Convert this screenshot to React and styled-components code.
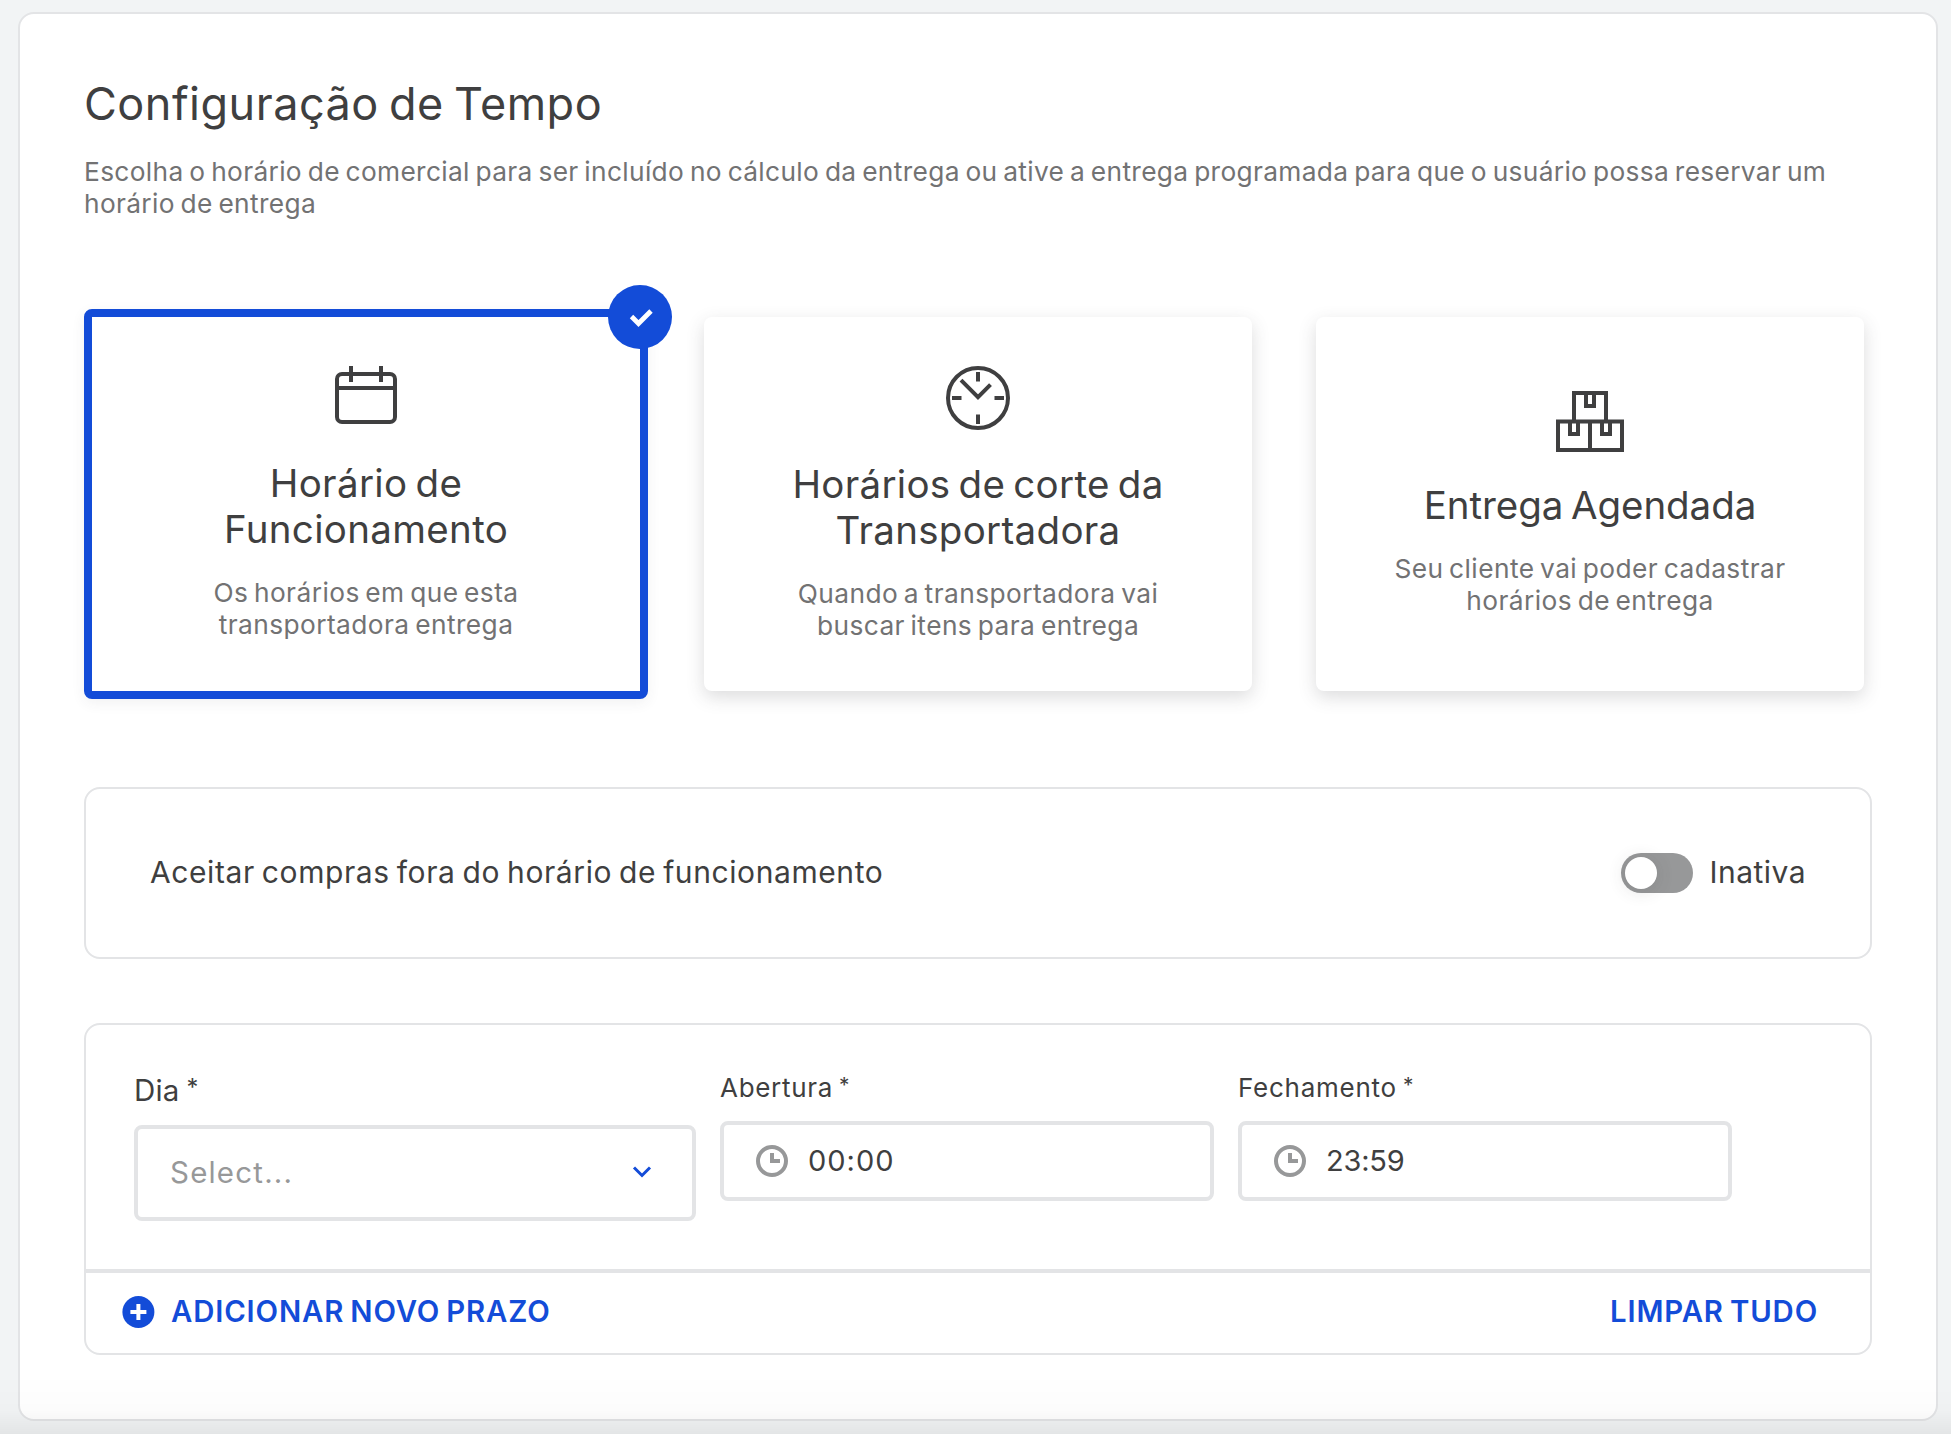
import React from "react";
import styled, { createGlobalStyle, css } from "styled-components";

const c = {
  page: "#f2f4f5",
  line: "#e3e4e6",
  text: "#3f3f40",
  muted: "#727273",
  soft: "#979899",
  blue: "#134cd8",
};

const Global = createGlobalStyle`
  *, *::before, *::after { box-sizing: border-box; }
  body {
    margin: 0;
    background: ${c.page};
    color: ${c.text};
    font-family: Inter, "Liberation Sans", sans-serif;
    overflow: hidden;
  }
  h1, h2, p { margin: 0; font-weight: 400; }
  svg { display: block; flex: none; overflow: visible; }
`;

const Page = styled.main`
  height: 1434px;
  padding: 12px 13px 0 18px;
  overflow: hidden;
`;

const Panel = styled.section`
  padding: 64px;
  background: #fff;
  border: 2px solid ${c.line};
  border-radius: 16px;
`;

const Title = styled.h1`
  font-size: 45px;
  line-height: 52px;
  letter-spacing: 0.5px;
  word-spacing: -3px;
`;

const Lead = styled.p`
  margin-top: 26px;
  font-size: 26.3px;
  line-height: 32px;
  letter-spacing: 0.343px;
  word-spacing: -2px;
  color: ${c.muted};
`;

const Options = styled.div`
  display: grid;
  grid-template-columns: repeat(3, 548px);
  gap: 64px;
  margin: 97px 8px 96px;
`;

const Option = styled.article`
  position: relative;
  display: flex;
  flex-direction: column;
  align-items: center;
  justify-content: center;
  height: 374px;
  text-align: center;
  background: #fff;
  border-radius: 8px;
  box-shadow: 0 6px 18px rgba(61, 62, 64, 0.18);
  ${(p) =>
    p.$selected &&
    css`
      height: 390px;
      margin: -8px;
      border: 8px solid ${c.blue};
      box-shadow: 0 4px 14px rgba(61, 62, 64, 0.07);
    `}
`;

const OptionTitle = styled.h2`
  margin: 31px 0 1px;
  max-width: ${(p) => p.$width}px;
  font-size: 38.5px;
  line-height: 46px;
  letter-spacing: ${(p) => p.$tracking}px;
  word-spacing: -3px;
`;

const OptionText = styled.p`
  margin-top: 24px;
  max-width: 420px;
  font-size: 26.3px;
  line-height: 32px;
  letter-spacing: 0.43px;
  word-spacing: -2.2px;
  color: ${c.muted};
`;

const Badge = styled.span`
  position: absolute;
  top: -32px;
  right: -32px;
  width: 64px;
  height: 64px;
  border-radius: 50%;
  background: ${c.blue};
`;

const Box = styled.section`
  border: 2px solid ${c.line};
  border-radius: 16px;
`;

const ToggleBox = styled(Box)`
  display: flex;
  align-items: center;
  justify-content: space-between;
  height: 172px;
  margin-bottom: 64px;
  padding: 0 64px;
`;

const Body = styled.span`
  padding-bottom: 2px;
  font-size: 30px;
  line-height: 38px;
  letter-spacing: ${(p) => p.$tracking}px;
  word-spacing: -2px;
`;

const ToggleGroup = styled.label`
  display: flex;
  align-items: center;
  gap: 17px;
`;

const Track = styled.span`
  display: flex;
  align-items: center;
  width: 72px;
  height: 40px;
  padding: 4px;
  border-radius: 20px;
  background: ${c.soft};
`;

const Knob = styled.span`
  width: 32px;
  height: 32px;
  border-radius: 50%;
  background: #fff;
  box-shadow: 0 2px 18px rgba(61, 62, 64, 0.16);
`;

const Fields = styled.div`
  display: flex;
  align-items: flex-start;
  gap: 24px;
  height: 244px;
  padding: 48px 48px 0;
`;

const Field = styled.div`
  width: ${(p) => p.$width}px;
`;

const Label = styled.div`
  display: flex;
  margin-bottom: 18px;
  font-size: ${(p) => (p.$large ? 29.5 : 26)}px;
  line-height: ${(p) => (p.$large ? 34 : 30)}px;
  letter-spacing: ${(p) => p.$tracking}px;
`;

const Star = styled.span`
  margin: -2px 0 0 ${(p) => (p.$large ? 7 : 6)}px;
  font-size: 0.8em;
`;

const Control = styled.div`
  display: flex;
  align-items: center;
  height: ${(p) => p.$height}px;
  padding: 0 ${(p) => (p.$height > 90 ? 41 : 32)}px 0 ${(p) => (p.$height > 90 ? 31 : 32)}px;
  border: 4px solid ${c.line};
  border-radius: 8px;
  background: #fff;
`;

const Placeholder = styled.span`
  flex: 1;
  padding: 0 0 2px 1px;
  font-size: 29.5px;
  letter-spacing: 1.2px;
  color: #979899;
`;

const Value = styled.span`
  margin-left: 20px;
  padding-bottom: 2px;
  font-size: 29px;
  letter-spacing: ${(p) => p.$tracking}px;
`;

const Footer = styled.div`
  display: flex;
  align-items: center;
  justify-content: space-between;
  height: 84px;
  padding: 0 52px 2px 36px;
  border-top: 4px solid ${c.line};
`;

const Action = styled.button`
  display: flex;
  align-items: center;
  gap: 17px;
  padding: 0;
  border: 0;
  background: none;
  font: 600 29.3px/36px Inter, "Liberation Sans", sans-serif;
  letter-spacing: 0.85px;
  word-spacing: -2px;
  color: ${c.blue};
`;

const BottomShade = styled.div`
  position: fixed;
  inset: auto 0 0 0;
  height: 60px;
  pointer-events: none;
  background: linear-gradient(rgba(0, 0, 0, 0), rgba(0, 0, 0, 0.012) 60%, rgba(0, 0, 0, 0.06));
`;

const Calendar = () => (
  <svg width="64" height="62" viewBox="0 3 64 62" fill="none" stroke={c.text} strokeWidth="4">
    <rect x="3" y="10" width="58" height="48" rx="5" />
    <path d="M3 24H61M17 2V18M47 2V18" />
  </svg>
);

const BigClock = () => (
  <svg width="64" height="64" viewBox="0 0 64 64" fill="none" stroke={c.text} strokeWidth="4">
    <circle cx="32" cy="32" r="30" />
    <path d="M32 6V15.5M32 48.5V58M6 32H15.5M48.5 32H58M15 14.2L32 31.2L44.5 18.7" />
  </svg>
);

const Boxes = () => (
  <svg width="68" height="60" viewBox="0 0 68 60" fill="none" stroke={c.text} strokeWidth="4">
    <path d="M18 30V2H50V30M30 2V15H38V2" />
    <path d="M2 30.5H66V59H2ZM34 30.5V59M14 30.5V43H22V30.5M46 30.5V43H54V30.5" />
  </svg>
);

const Check = () => (
  <svg width="64" height="64" viewBox="0 0 64 64" fill="none" stroke="#fff" strokeWidth="4.8">
    <path d="M23.5 31.5L30.5 38.5L43 26" />
  </svg>
);

const SmallClock = () => (
  <svg width="32" height="32" viewBox="0 0 32 32" fill="none" stroke={c.soft} strokeWidth="4">
    <circle cx="16" cy="16" r="14" />
    <path d="M16 8V16H24" />
  </svg>
);

const Chevron = () => (
  <svg width="18" height="14" viewBox="0 0 18 14" fill="none" stroke={c.blue} strokeWidth="3">
    <path d="M1 1.5L9 9.5L17 1.5" />
  </svg>
);

const Plus = () => (
  <svg width="32" height="32" viewBox="0 0 32 32">
    <circle cx="16.4" cy="16" r="16" fill={c.blue} />
    <path d="M16.4 8V24M8.4 16H24.4" stroke="#fff" strokeWidth="4" />
  </svg>
);

export default function App() {
  return (
    <>
      <Global />
      <Page>
        <Panel>
          <Title>Configuração de Tempo</Title>
          <Lead>
            Escolha o horário de comercial para ser incluído no cálculo da entrega ou ative a entrega
            programada para que o usuário possa reservar um horário de entrega
          </Lead>

          <Options>
            <Option $selected>
              <Badge>
                <Check />
              </Badge>
              <Calendar />
              <OptionTitle $width={340} $tracking={0.33}>Horário de Funcionamento</OptionTitle>
              <OptionText>Os horários em que esta transportadora entrega</OptionText>
            </Option>
            <Option>
              <BigClock />
              <OptionTitle $width={420} $tracking={0.3}>Horários de corte da Transportadora</OptionTitle>
              <OptionText>Quando a transportadora vai buscar itens para entrega</OptionText>
            </Option>
            <Option>
              <Boxes />
              <OptionTitle $width={420} $tracking={-0.07}>Entrega Agendada</OptionTitle>
              <OptionText>Seu cliente vai poder cadastrar horários de entrega</OptionText>
            </Option>
          </Options>

          <ToggleBox>
            <Body $tracking={0.59}>Aceitar compras fora do horário de funcionamento</Body>
            <ToggleGroup>
              <Track>
                <Knob />
              </Track>
              <Body $tracking={0.45}>Inativa</Body>
            </ToggleGroup>
          </ToggleBox>

          <Box>
            <Fields>
              <Field $width={562}>
                <Label $large $tracking={0.2}>
                  Dia <Star $large>*</Star>
                </Label>
                <Control $height={96}>
                  <Placeholder>Select...</Placeholder>
                  <Chevron />
                </Control>
              </Field>
              <Field $width={494}>
                <Label $tracking={0.7}>
                  Abertura <Star>*</Star>
                </Label>
                <Control $height={80}>
                  <SmallClock />
                  <Value $tracking={1}>00:00</Value>
                </Control>
              </Field>
              <Field $width={494}>
                <Label $tracking={0.75}>
                  Fechamento <Star>*</Star>
                </Label>
                <Control $height={80}>
                  <SmallClock />
                  <Value $tracking={-0.2}>23:59</Value>
                </Control>
              </Field>
            </Fields>
            <Footer>
              <Action>
                <Plus />
                ADICIONAR NOVO PRAZO
              </Action>
              <Action>LIMPAR TUDO</Action>
            </Footer>
          </Box>
        </Panel>
      </Page>
      <BottomShade />
    </>
  );
}
